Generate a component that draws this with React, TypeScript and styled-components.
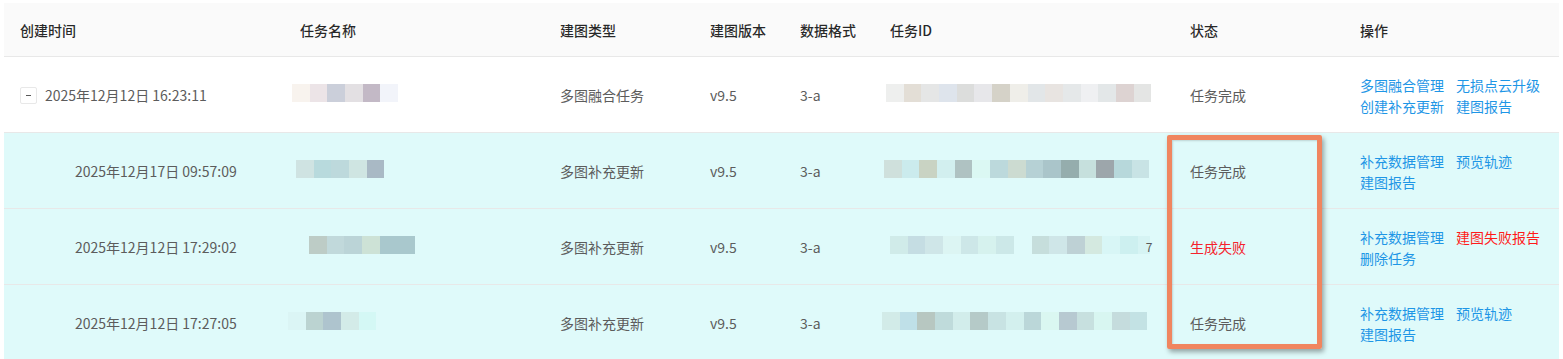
import React from 'react';
import styled, { createGlobalStyle } from 'styled-components';

const GlobalStyle = createGlobalStyle`
  body {
    margin: 0;
    background: #fff;
    font-family: "Noto Sans CJK SC", "Noto Sans", sans-serif;
    font-size: 14px;
    color: #595959;
  }
`;

const COLUMNS = '280px 260px 150px 90px 90px 300px 170px 1fr';

type Block = string | { c: string; w: number };

interface TaskRow {
  time: string;
  child: boolean;
  name: Block[];
  nameOffset: number;
  type: string;
  version: string;
  format: string;
  id: Block[];
  idOffset: number;
  idTail?: string;
  status: string;
  failed?: boolean;
  actions: { label: string; danger?: boolean }[];
}

const rows: TaskRow[] = [
  {
    time: '2025年12月12日 16:23:11',
    child: false,
    name: ['#f8f3ee', '#ece4e7', '#cbcfda', '#e3e0e3', '#c3b9c6', '#f2f4fa'],
    nameOffset: -8,
    type: '多图融合任务',
    version: 'v9.5',
    format: '3-a',
    id: [
      '#eeefee', '#e3ded6', '#e5e6e6', '#dee4ec', '#dcdddc', '#e7e7ea', '#d5d2c8', '#efeee9',
      '#e2e6e8', '#e8e4e1', '#e5e8e9', '#eff0f2', '#e3e7e8', '#ddd3d2', '#e4e5e4',
    ],
    idOffset: -4,
    status: '任务完成',
    actions: [
      { label: '多图融合管理' },
      { label: '无损点云升级' },
      { label: '创建补充更新' },
      { label: '建图报告' },
    ],
  },
  {
    time: '2025年12月17日 09:57:09',
    child: true,
    name: ['#cfe3e2', '#b8dadd', '#bdd9dc', '#cfe5e2', '#a9b9c5'],
    nameOffset: -4,
    type: '多图补充更新',
    version: 'v9.5',
    format: '3-a',
    id: [
      '#cfe0dc', '#cbebed', '#c9d3c3', '#d2efef', '#afc2c2', '#dbf8f3', '#bcd9dc', '#ccdbd1',
      '#b6d1d5', '#aac5ca', '#95adad', '#c6e0dd', '#9da6ab', '#b7d8db', '#c8e3e5',
    ],
    idOffset: -6,
    status: '任务完成',
    actions: [{ label: '补充数据管理' }, { label: '预览轨迹' }, { label: '建图报告' }],
  },
  {
    time: '2025年12月12日 17:29:02',
    child: true,
    name: ['#bdccc6', '#c1d9db', '#bbd4d7', '#cde2d6', '#a9c8cd', '#a9c8cd'],
    nameOffset: 9,
    type: '多图补充更新',
    version: 'v9.5',
    format: '3-a',
    id: [
      '#d0ebe9', '#c5dde3', '#cfe6e8', '#dcf5f3', '#cde7e8', '#d6f2ee', '#cce8e8', 'transparent',
      '#c6dedc', '#cfe6e8', '#bed1d5', '#d4e9e0', '#d8f6f6', '#cdf0f0', { c: '#d6f4f4', w: 12 },
    ],
    idOffset: 0,
    idTail: '7',
    status: '生成失败',
    failed: true,
    actions: [
      { label: '补充数据管理' },
      { label: '建图失败报告', danger: true },
      { label: '删除任务' },
    ],
  },
  {
    time: '2025年12月12日 17:27:05',
    child: true,
    name: ['#dbf5f5', '#bbd3d1', '#aec4ce', '#d3ebe8', '#d4f8f5'],
    nameOffset: -12,
    type: '多图补充更新',
    version: 'v9.5',
    format: '3-a',
    id: [
      '#d2ebe8', '#bfe0e8', '#b7c7c1', '#bfdbdb', '#d2edeb', '#b5cac8', '#c8e3e3', '#d3f0ee',
      '#bbd7d9', '#daf7f1', '#b7c9d1', '#c7e0df', '#d8f6f1', '#c5dcdd', '#c3e2e4',
    ],
    idOffset: -8,
    status: '任务完成',
    actions: [{ label: '补充数据管理' }, { label: '预览轨迹' }, { label: '建图报告' }],
  },
];

const App: React.FC = () => {
  return (
    <>
      <GlobalStyle />
      <Page>
        <Table>
          <HeaderRow>
            <HeadCell>创建时间</HeadCell>
            <HeadCell>任务名称</HeadCell>
            <HeadCell>建图类型</HeadCell>
            <HeadCell>建图版本</HeadCell>
            <HeadCell>数据格式</HeadCell>
            <HeadCell>任务ID</HeadCell>
            <HeadCell>状态</HeadCell>
            <HeadCell>操作</HeadCell>
          </HeaderRow>
          {rows.map((r, i) => (
            <BodyRow key={i} $child={r.child}>
              <Cell>
                {r.child ? <Indent /> : <ExpandButton><Dash /></ExpandButton>}
                {r.time}
              </Cell>
              <Cell>
                <Mosaic $offset={r.nameOffset}>
                  {r.name.map((b, j) => (
                    <Pixel key={j} $color={typeof b === 'string' ? b : b.c} $w={typeof b === 'string' ? undefined : b.w} />
                  ))}
                </Mosaic>
              </Cell>
              <Cell>{r.type}</Cell>
              <Cell>{r.version}</Cell>
              <Cell>{r.format}</Cell>
              <Cell>
                <Mosaic $offset={r.idOffset}>
                  {r.id.map((b, j) => (
                    <Pixel key={j} $color={typeof b === 'string' ? b : b.c} $w={typeof b === 'string' ? undefined : b.w} />
                  ))}
                </Mosaic>
                {r.idTail && <Tail>{r.idTail}</Tail>}
              </Cell>
              <Cell>
                <Status $failed={r.failed}>{r.status}</Status>
              </Cell>
              <ActionCell>
                {r.actions.map((a) => (
                  <ActionLink key={a.label} $danger={a.danger}>
                    {a.label}
                  </ActionLink>
                ))}
              </ActionCell>
            </BodyRow>
          ))}
          <Highlight />
        </Table>
      </Page>
    </>
  );
};

const Page = styled.div`
  padding: 3px 4px 0;
  height: 359px;
  box-sizing: border-box;
  overflow: hidden;
`;

const Table = styled.div`
  position: relative;
  width: 1555px;
`;

const HeaderRow = styled.div`
  display: grid;
  grid-template-columns: ${COLUMNS};
  height: 53px;
  background: #fafafa;
  border-bottom: 1px solid #e8e8e8;
`;

const HeadCell = styled.div`
  display: flex;
  align-items: center;
  padding: 0 16px;
  font-weight: 500;
  color: rgba(0, 0, 0, 0.85);
`;

const BodyRow = styled.div<{ $child: boolean }>`
  display: grid;
  grid-template-columns: ${COLUMNS};
  height: 75px;
  border-bottom: 1px solid #e8e8e8;
  background: ${({ $child }) => ($child ? '#dffafa' : '#fff')};
`;

const Cell = styled.div`
  display: flex;
  align-items: center;
  padding: 0 16px;
  white-space: nowrap;
  color: #5c5c5c;
`;

const ExpandButton = styled.span`
  display: inline-flex;
  align-items: center;
  justify-content: center;
  width: 17px;
  height: 17px;
  box-sizing: border-box;
  margin-right: 8px;
  margin-top: 1px;
  border: 1px solid #e8e8e8;
  border-radius: 2px;
  background: #fff;
`;

const Dash = styled.span`
  display: block;
  width: 5px;
  height: 1px;
  background: #595959;
`;

const Indent = styled.span`
  display: inline-block;
  width: 55px;
  flex-shrink: 0;
`;

const Mosaic = styled.div<{ $offset: number }>`
  display: flex;
  margin-left: ${({ $offset }) => $offset}px;
  margin-top: -3px;
`;

const Pixel = styled.span<{ $color: string; $w?: number }>`
  display: block;
  width: ${({ $w }) => ($w ? `${$w}px` : '17.7px')};
  height: 18px;
  background: ${({ $color }) => $color};
`;

const Tail = styled.span`
  margin-left: -4px;
  font-size: 12px;
  color: #595959;
`;

const Status = styled.span<{ $failed?: boolean }>`
  color: ${({ $failed }) => ($failed ? '#f5222d' : '#5c5c5c')};
`;

const ActionCell = styled.div`
  display: flex;
  flex-wrap: wrap;
  align-content: center;
  column-gap: 12px;
  padding: 2px 16px 0;
  line-height: 21px;
`;

const ActionLink = styled.a<{ $danger?: boolean }>`
  color: ${({ $danger }) => ($danger ? '#ff1a1a' : '#1e96e6')};
  cursor: pointer;
  white-space: nowrap;
`;

const Highlight = styled.div`
  position: absolute;
  left: 1163px;
  top: 132px;
  width: 155px;
  height: 214px;
  box-sizing: border-box;
  border: 5px solid #f0855f;
  border-radius: 2px;
  box-shadow: 2px 3px 5px rgba(0, 0, 0, 0.35), inset 1px 1px 2px rgba(0, 0, 0, 0.15);
  pointer-events: none;
`;

export default App;
